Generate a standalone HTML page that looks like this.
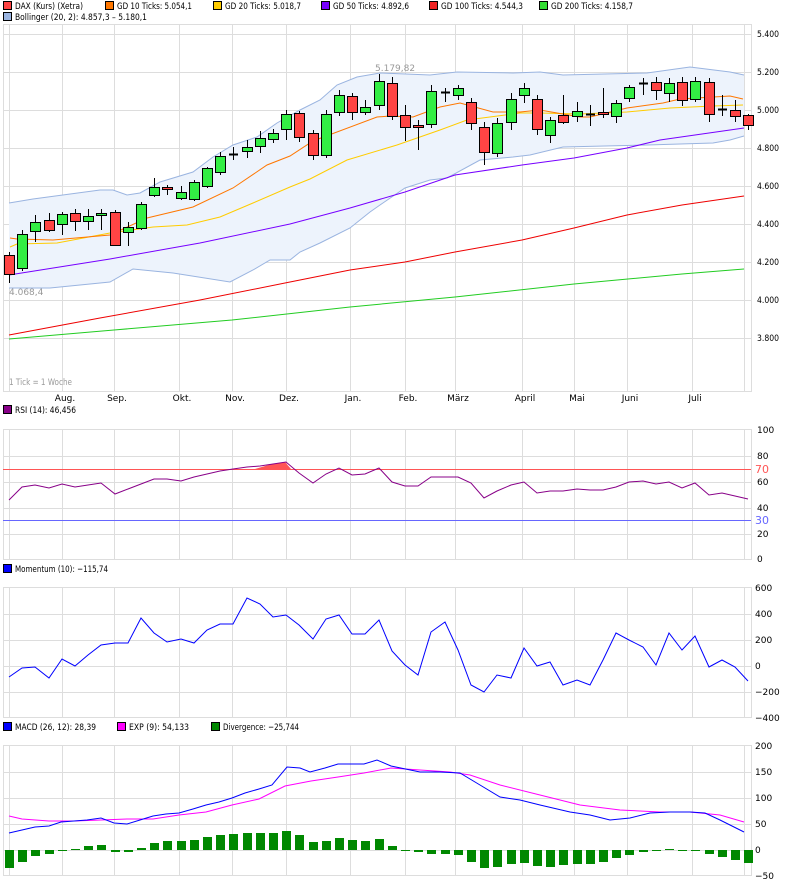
<!DOCTYPE html>
<html><head><meta charset="utf-8"><style>
html,body{margin:0;padding:0;background:#fff;}
svg{display:block;font-family:"DejaVu Sans","Liberation Sans",sans-serif;font-size:9px;}
</style></head><body>
<svg id="s" width="792" height="885" xmlns="http://www.w3.org/2000/svg">
<g>
<rect x="3.5" y="1.5" width="8" height="8" fill="#f44" stroke="#000"/><text x="15" y="9" textLength="68" lengthAdjust="spacingAndGlyphs">DAX (Kurs) (Xetra)</text>
<rect x="105.5" y="1.5" width="8" height="8" fill="#f70" stroke="#000"/><text x="117" y="9" textLength="75" lengthAdjust="spacingAndGlyphs">GD 10 Ticks: 5.054,1</text>
<rect x="213.5" y="1.5" width="8" height="8" fill="#fc0" stroke="#000"/><text x="225" y="9" textLength="76" lengthAdjust="spacingAndGlyphs">GD 20 Ticks: 5.018,7</text>
<rect x="321.5" y="1.5" width="8" height="8" fill="#70f" stroke="#000"/><text x="333" y="9" textLength="76" lengthAdjust="spacingAndGlyphs">GD 50 Ticks: 4.892,6</text>
<rect x="429.5" y="1.5" width="8" height="8" fill="#e22" stroke="#000"/><text x="441" y="9" textLength="82" lengthAdjust="spacingAndGlyphs">GD 100 Ticks: 4.544,3</text>
<rect x="539.5" y="1.5" width="8" height="8" fill="#3d3" stroke="#000"/><text x="551" y="9" textLength="82" lengthAdjust="spacingAndGlyphs">GD 200 Ticks: 4.158,7</text>
<rect x="3.5" y="12.5" width="8" height="8" fill="#9ab4e0" stroke="#000"/><text x="15" y="20" textLength="132" lengthAdjust="spacingAndGlyphs">Bollinger (20, 2): 4.857,3 – 5.180,1</text>
<rect x="3.5" y="405.5" width="8" height="8" fill="#808" stroke="#000"/><text x="15" y="413" textLength="61" lengthAdjust="spacingAndGlyphs">RSI (14): 46,456</text>
<rect x="3.5" y="564.5" width="8" height="8" fill="#00f" stroke="#000"/><text x="15" y="572" textLength="93" lengthAdjust="spacingAndGlyphs">Momentum (10): −115,74</text>
<rect x="3.5" y="722.5" width="8" height="8" fill="#00f" stroke="#000"/><text x="15" y="730" textLength="81" lengthAdjust="spacingAndGlyphs">MACD (26, 12): 28,39</text>
<rect x="117.5" y="722.5" width="8" height="8" fill="#f0f" stroke="#000"/><text x="129" y="730" textLength="60" lengthAdjust="spacingAndGlyphs">EXP (9): 54,133</text>
<rect x="211.5" y="722.5" width="8" height="8" fill="#080" stroke="#000"/><text x="223" y="730" textLength="76" lengthAdjust="spacingAndGlyphs">Divergence: −25,744</text>
</g>
<g id="g"></g>
</svg>
<script>
var NS="http://www.w3.org/2000/svg",G=document.getElementById('g');
function el(t,a,txt){var e=document.createElementNS(NS,t);for(var k in a)e.setAttribute(k,a[k]);if(txt!=null)e.textContent=txt;G.appendChild(e);return e;}
function pl(pts,c,w,f){return el('polyline',{points:pts.map(function(p){return p.join(',')}).join(' '),fill:f||'none',stroke:c,'stroke-width':w||1});}
var VX=[9,62,114,179,232,286,350,405,455,522,574,627,692,744];
function panel(t,b,hs){
  el('rect',{x:3.5,y:t+.5,width:748,height:b-t,fill:'#fff',stroke:'#ddd'});
  hs.forEach(function(y){el('line',{x1:3,x2:751,y1:y+.5,y2:y+.5,stroke:'#ddd'});});
  VX.forEach(function(x){el('line',{x1:x+.5,x2:x+.5,y1:t,y2:b,stroke:'#ddd'});});
}
panel(24,391,[34,72,110,148,186,224,262,300,338]);
var lab=['5.400','5.200','5.000','4.800','4.600','4.400','4.200','4.000','3.800'];
lab.forEach(function(l,i){el('text',{x:757,y:34+i*38+3,textLength:22,lengthAdjust:'spacingAndGlyphs'},l);});
var mon=[['Aug.',62],['Sep.',114],['Okt.',179],['Nov.',232],['Dez.',286],['Jan.',350],['Feb.',405],['März',455],['April',522],['Mai',574],['Juni',627],['Juli',692]];
mon.forEach(function(m){el('text',{x:m[1]+3,y:401,'text-anchor':'middle'},m[0]);});
el('text',{x:9,y:385,fill:'#999',textLength:63,lengthAdjust:'spacingAndGlyphs'},'1 Tick = 1 Woche');
var up=[[9,203],[33,199],[100,190],[113,190],[127,195],[140,193],[160,182],[193,172],[213,157],[233,145],[257,137],[277,123],[300,110],[320,100],[337,85],[357,77],[380,73],[430,75],[457,72],[513,73],[540,72],[563,75],[647,73],[690,67],[730,72],[744,75]];
var lo=[[744,136],[730,140],[713,143],[647,145],[563,147],[530,155],[513,157],[480,160],[447,178],[430,180],[405,188],[380,205],[370,212],[350,228],[320,243],[300,252],[290,260],[270,260],[253,270],[230,282],[173,273],[133,269],[110,282],[50,288],[9,288]];
pl(up.concat(lo),'none',0,'#edf3fc');
pl(up,'#9ab4e0',1);pl(lo,'#9ab4e0',1);
pl([[9,339],[114,330],[232,320],[350,307],[455,297],[574,284],[682,274],[744,269]],'#2c2',1);
pl([[9,335],[100,318],[200,300],[285,283],[350,270],[405,262],[455,252],[522,240],[574,228],[627,215],[682,205],[744,196]],'#e00',1);
pl([[9,275],[110,259],[200,243],[290,224],[350,208],[405,192],[455,175],[522,165],[574,158],[627,148],[660,140],[744,128]],'#70f',1);
pl([[10,247],[17,244],[57,243],[110,233],[153,227],[187,225],[220,217],[253,203],[290,187],[310,179],[347,160],[397,145],[440,130],[467,120],[520,113],[540,113],[580,114],[627,112],[670,108],[713,106],[743,105]],'#fc0',1);
pl([[10,238],[17,239],[53,240],[110,235],[147,218],[193,207],[233,188],[267,165],[290,156],[313,141],[377,117],[390,116],[413,117],[440,107],[460,103],[493,112],[520,112],[540,110],[580,117],[590,117],[627,108],[663,103],[680,99],[730,96],[743,99]],'#f70',1);
var C=[[255,274,0],[234,268,1],[222,231,1],[220,230,0],[214,224,1],[213,221,0],[216,221,1],[213,215,1],[212,245,0],[227,232,1],[204,228,1],[187,195,1],[187,189,0],[192,198,1],[182,199,1],[168,186,1],[156,172,1],[154,154,2],[147,151,1],[138,146,1],[133,139,1],
[114,129,1],[113,137,0],[133,155,0],[114,155,1],[95,112,1],[96,112,0],[107,112,1],[81,105,1],[83,116,0],[115,127,0],[125,127,0],[91,124,1],[92,92,2],[88,95,1],[102,123,0],[127,152,0],[123,153,1],[99,122,1],[88,95,1],[99,129,0],
[120,135,1],[115,122,0],[111,116,1],[114,114,2],[112,114,0],[103,116,1],[87,98,1],[83,83,2],[82,90,0],[83,93,1],[82,100,0],[81,99,1],[82,114,0],[109,109,2],[110,116,0],[115,125,0]];
var W=[[252,283],[230,271],[215,242],[213,232],[212,235],[209,231],[209,230],[209,230],[210,246],[222,246],[202,230],[178,197],[185,195],[186,200],[180,201],[167,188],[152,175],[147,160],[140,158],[131,153],[129,143],
[110,140],[111,142],[130,160],[110,158],[90,116],[93,120],[100,115],[74,110],[77,120],[105,141],[120,150],[85,128],[88,102],[85,100],[98,130],[122,165],[118,157],[93,130],[83,103],[95,135],
[117,143],[95,124],[102,122],[105,126],[88,118],[100,123],[85,102],[78,95],[77,100],[78,102],[77,106],[77,102],[78,122],[95,116],[100,122],[114,130]];
C.forEach(function(c,i){var x=Math.round(9+i*13.2);var w=W[i];
 el('line',{x1:x+.5,x2:x+.5,y1:w[0],y2:w[1],stroke:'#000'});
 if(c[2]==2){el('line',{x1:x-4,x2:x+5,y1:c[0]+.5,y2:c[0]+.5,stroke:'#000','stroke-width':2});}
 else el('rect',{x:x-4.5,y:c[0]+.5,width:10,height:Math.max(1,c[1]-c[0]),fill:c[2]?'#3e4':'#f44',stroke:'#000'});
});
el('text',{x:375,y:71,fill:'#999'},'5.179,82');
el('text',{x:9,y:295,fill:'#999'},'4.068,4');
panel(429,559,[456,482,508,534]);
el('line',{x1:3,x2:751,y1:469.5,y2:469.5,stroke:'#ff5555'});
el('line',{x1:3,x2:751,y1:520.5,y2:520.5,stroke:'#6666ff'});
[['100',433],['80',459],['60',485],['40',511],['20',537],['0',562]].forEach(function(a){el('text',{x:757,y:a[1]},a[0]);});
el('text',{x:755,y:473,fill:'#f55','font-size':'11px'},'70');el('text',{x:755,y:524,fill:'#66f','font-size':'11px'},'30');
var R=[500,487,485,488,484,487,485,483,494,489,484,479,479,481,477,474,471,469,467,466,464,462,473,483,474,468,475,474,468,482,486,486,477,477,477,483,498,491,485,482,493,491,491,489,490,490,487,482,481,484,482,488,483,495,493,496,499];
var RP=R.map(function(v,i){return [Math.round(9+i*13.2),v];});
el('polygon',{points:'255,469 272,464 285,462 291,469',fill:'#f55'});
pl(RP,'#808',1);
panel(587,717,[614,640,666,692]);
[['600',591],['400',617],['200',643],['0',669],['−200',695],['−400',721]].forEach(function(a){el('text',{x:755,y:a[1]},a[0]);});
var M=[677,668,667,678,659,666,655,645,643,643,618,633,642,639,643,630,624,624,598,604,617,615,625,639,619,615,634,634,620,651,665,675,632,622,650,685,692,675,678,648,666,662,685,680,685,660,633,640,647,665,633,650,636,667,660,667,681];
pl(M.map(function(v,i){return [Math.round(9+i*13.2),v];}),'#00f',1);
panel(745,875,[772,798,824,850]);
[['200',749],['150',775],['100',801],['50',827],['0',853],['−50',879]].forEach(function(a){el('text',{x:755,y:a[1]},a[0]);});
var H=[-18,-12,-6,-4,-1,1,4,5,-2,-2,2,7,9,9,10,13,15,16,17,17,17,19,15,8,9,12,10,9,11,4,-1,-2,-4,-4,-5,-12,-18,-17,-14,-13,-16,-17,-15,-14,-14,-12,-8,-5,-2,-1,1,-1,-1,-4,-7,-10,-13];
H.forEach(function(h,i){var x=Math.round(9+i*13.2);var y=h>0?850-h:850;el('rect',{x:x-4,y:y,width:9,height:Math.max(1,Math.abs(h)),fill:'#080'});});
pl([[9,816],[22,819],[49,821],[74,821],[101,820],[127,819],[153,819],[179,815],[206,812],[232,805],[259,799],[285,786],[311,781],[338,777],[364,773],[391,768],[420,770],[450,772],[470,775],[500,785],[540,795],[580,805],[620,810],[660,812],[690,812],[720,815],[744,822]],'#f0f',1);
pl([[9,833],[22,830],[35,827],[49,826],[61,822],[74,821],[87,820],[101,818],[114,823],[127,824],[140,820],[153,816],[166,814],[179,813],[193,809],[206,805],[219,802],[232,798],[245,793],[259,789],[272,785],[287,767],[300,768],[310,772],[325,768],[338,764],[351,764],[364,764],[377,760],[391,766],[420,772],[440,772],[460,773],[480,785],[500,797],[520,800],[540,805],[570,812],[590,815],[610,820],[630,818],[650,813],[670,812],[690,812],[705,813],[720,820],[744,832]],'#00f',1);
</script>
</body></html>
